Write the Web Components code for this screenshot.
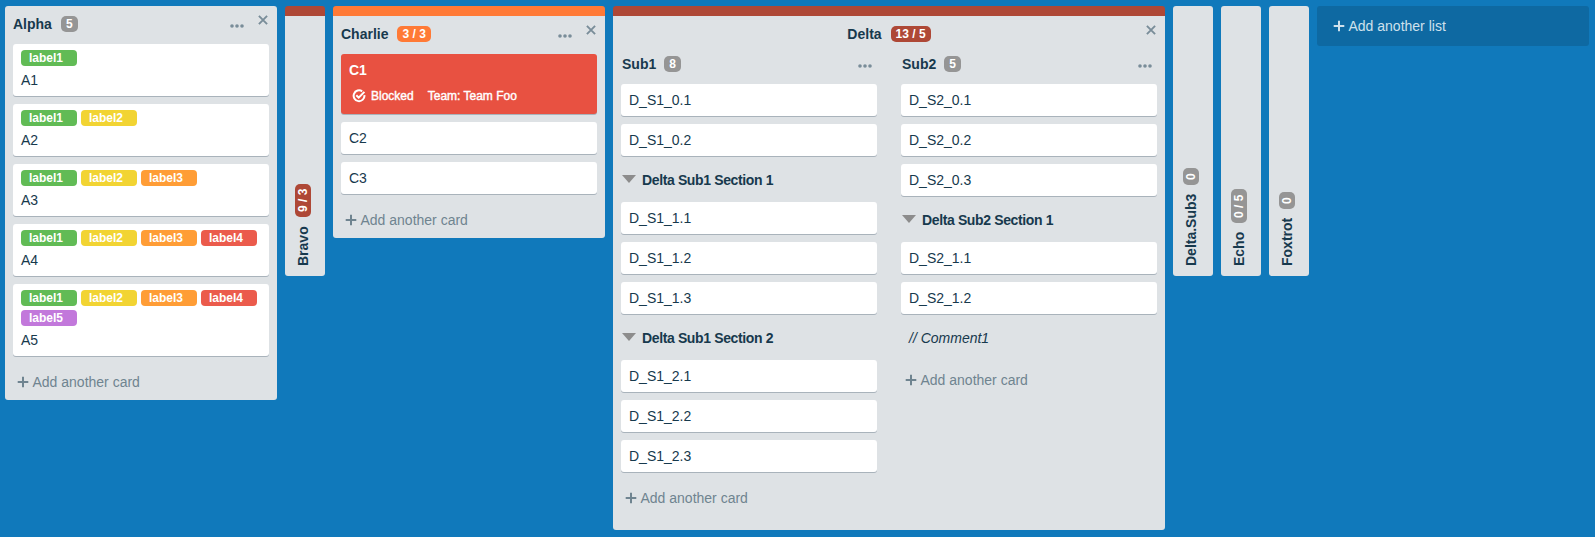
<!DOCTYPE html>
<html lang="en">
<head>
<meta charset="utf-8">
<title>Board</title>
<style>
  html, body { margin: 0; height: 100%; }
  body { background: #1079bb; overflow: hidden; font: 14px/20px "Liberation Sans", Arial, sans-serif; color: #17394d; }
</style>
</head>
<body>
<kb-board>
  <kb-list name="Alpha" count="5">
    <kb-card labels="1">A1</kb-card>
    <kb-card labels="1 2">A2</kb-card>
    <kb-card labels="1 2 3">A3</kb-card>
    <kb-card labels="1 2 3 4">A4</kb-card>
    <kb-card labels="1 2 3 4 5">A5</kb-card>
  </kb-list>
  <kb-collapsed name="Bravo" count="9 / 3" level="over"></kb-collapsed>
  <kb-list name="Charlie" count="3 / 3" level="full">
    <kb-card blocked fields="Team: Team Foo">C1</kb-card>
    <kb-card>C2</kb-card>
    <kb-card>C3</kb-card>
  </kb-list>
  <kb-group name="Delta" count="13 / 5" level="over">
    <kb-list sub name="Sub1" count="8">
      <kb-card>D_S1_0.1</kb-card>
      <kb-card>D_S1_0.2</kb-card>
      <kb-section>Delta Sub1 Section 1</kb-section>
      <kb-card>D_S1_1.1</kb-card>
      <kb-card>D_S1_1.2</kb-card>
      <kb-card>D_S1_1.3</kb-card>
      <kb-section>Delta Sub1 Section 2</kb-section>
      <kb-card>D_S1_2.1</kb-card>
      <kb-card>D_S1_2.2</kb-card>
      <kb-card>D_S1_2.3</kb-card>
    </kb-list>
    <kb-list sub name="Sub2" count="5">
      <kb-card>D_S2_0.1</kb-card>
      <kb-card>D_S2_0.2</kb-card>
      <kb-card>D_S2_0.3</kb-card>
      <kb-section>Delta Sub2 Section 1</kb-section>
      <kb-card>D_S2_1.1</kb-card>
      <kb-card>D_S2_1.2</kb-card>
      <kb-card comment>// Comment1</kb-card>
    </kb-list>
  </kb-group>
  <kb-collapsed name="Delta.Sub3" count="0"></kb-collapsed>
  <kb-collapsed name="Echo" count="0 / 5"></kb-collapsed>
  <kb-collapsed name="Foxtrot" count="0"></kb-collapsed>
  <kb-add-list>Add another list</kb-add-list>
</kb-board>

<script>
const icons = {
  close: '<svg width="10" height="10" viewBox="0 0 10 10"><path d="M.9.9 9.1 9.1M9.1.9.9 9.1" stroke="#798d99" stroke-width="1.9" fill="none"/></svg>',
  dots: '<svg width="14" height="4" viewBox="0 0 14 4" fill="#798d99"><circle cx="2" cy="2" r="1.8"/><circle cx="7" cy="2" r="1.8"/><circle cx="12" cy="2" r="1.8"/></svg>',
  plus: '<svg width="12" height="12" viewBox="0 0 12 12"><path d="M6 .7V11.3M.7 6H11.3" stroke="currentColor" stroke-width="2" fill="none"/></svg>',
  check: '<svg width="14" height="14" viewBox="0 0 14 14" fill="none" stroke="#fff" stroke-width="2"><path d="M10.2 2.4A5.4 5.4 0 1 0 12.4 6.2"/><path d="M4.3 6.2 6.7 8.6 12.4 2.9"/></svg>'
};

class KbElement extends HTMLElement {
  connectedCallback() {
    if (this.shadowRoot) return;
    this.attachShadow({ mode: 'open' }).innerHTML = this.render();
  }
  attr(name) { return this.getAttribute(name) || ''; }
}

customElements.define('kb-board', class extends KbElement {
  render() {
    return `<style>
      :host { display: flex; align-items: flex-start; gap: 8px; padding: 6px 5px; width: 1595px; box-sizing: border-box; }
    </style><slot></slot>`;
  }
});

customElements.define('kb-count', class extends KbElement {
  render() {
    return `<style>
      :host { display: block; flex: none; height: 16px; padding: 0 5px; border-radius: 5px; background: #959595; color: #fff; font-weight: bold; font-size: 12px; line-height: 16px; white-space: nowrap; }
      :host([level="full"]) { background: #ff7a36; }
      :host([level="over"]) { background: #ae4836; }
    </style><slot></slot>`;
  }
});

customElements.define('kb-card', class extends KbElement {
  render() {
    const labels = this.attr('labels').split(' ').filter(Boolean);
    const blocked = this.hasAttribute('blocked');
    return `<style>
      :host { display: block; box-sizing: border-box; min-height: 32px; padding: 6px 8px; border-radius: 3px; background: #fff; box-shadow: 0 1px 0 #a9b3bb; }
      :host([comment]) { background: none; box-shadow: none; font-style: italic; }
      :host([blocked]) { background: #e85141; color: #fff; height: 60px; }
      :host([blocked]) .title { font-weight: bold; }
      .title { height: 20px; }
      .labels { display: flex; flex-wrap: wrap; gap: 4px; margin-bottom: 4px; width: 240px; }
      .labels span { box-sizing: border-box; width: 56px; height: 16px; padding-left: 8px; border-radius: 4px; color: #fff; font-weight: bold; font-size: 12px; line-height: 16px; }
      .l1 { background: #61bb55; } .l2 { background: #f2d433; } .l3 { background: #ff9d36; } .l4 { background: #eb5b4c; } .l5 { background: #c278db; }
      .badges { display: flex; align-items: center; margin: 7px 0 0 3px; height: 18px; font-size: 12px; line-height: 18px; -webkit-text-stroke: .4px #fff; }
      .badges span { margin-left: 5px; } .badges span + span { margin-left: 14px; }
      svg { display: block; }
    </style>
    ${labels.length ? `<div class="labels">${labels.map(n => `<span class="l${n}">label${n}</span>`).join('')}</div>` : ''}
    <div class="title"><slot></slot></div>
    ${blocked ? `<div class="badges">${icons.check}<span>Blocked</span><span>${this.attr('fields')}</span></div>` : ''}`;
  }
});

customElements.define('kb-section', class extends KbElement {
  render() {
    return `<style>
      :host { display: flex; align-items: center; height: 30px; padding: 0 1px; gap: 6px; font-weight: bold; font-size: 14px; letter-spacing: -.37px; }
      i { width: 0; border: 7px solid transparent; border-top: 8px solid #8c8c8c; border-bottom: 0; }
      span { padding-top: 2px; }
    </style><i></i><span><slot></slot></span>`;
  }
});

customElements.define('kb-list', class extends KbElement {
  render() {
    const sub = this.hasAttribute('sub');
    return `<style>
      :host { display: block; flex: none; box-sizing: border-box; width: 272px; border-radius: 3px; background: #dee2e5; overflow: hidden; }
      :host([level="full"]) { border-top: 10px solid #ff7a36; }
      :host([sub]) { width: 256px; background: none; border-radius: 0; overflow: visible; }
      header { display: flex; height: 38px; padding: 0 9px 0 8px; box-sizing: border-box; }
      h2 { margin: 8px 9px 0 0; font-size: 14px; line-height: 20px; }
      kb-count { margin-top: 10px; }
      .tools { display: flex; margin-left: auto; gap: 14px; }
      .dots { margin-top: 18px; } .close { margin-top: 9px; }
      svg { display: block; }
      .cards { display: flex; flex-direction: column; gap: 8px; padding: 0 8px; }
      footer { display: flex; align-items: center; gap: 3.5px; height: 20px; padding: 16px 12px 8px; color: #6f8490; }
      :host([sub]) header { height: 30px; padding: 0 5px 0 1px; }
      :host([sub]) h2 { margin: 0 8px 0 0; } :host([sub]) kb-count { margin-top: 2px; } :host([sub]) .dots { margin-top: 10px; }
      :host([sub]) .cards { padding: 0; }
      :host([sub]) footer { padding-left: 4px; }
    </style>
    <header><h2>${this.attr('name')}</h2><kb-count level="${this.attr('level')}">${this.attr('count')}</kb-count>
      <div class="tools"><div class="dots">${icons.dots}</div>${sub ? '' : `<div class="close">${icons.close}</div>`}</div></header>
    <div class="cards"><slot></slot></div>
    <footer>${icons.plus}<span>Add another card</span></footer>`;
  }
});

customElements.define('kb-group', class extends KbElement {
  render() {
    return `<style>
      :host { display: block; flex: none; box-sizing: border-box; width: 552px; height: 524px; padding: 0 8px; border-radius: 3px; border-top: 10px solid #ae4836; background: #dee2e5; }
      header { display: grid; grid-template-columns: 1fr auto 1fr; height: 38px; }
      .name { grid-column: 2; display: flex; gap: 9px; }
      h2 { margin: 8px 0 0; font-size: 14px; line-height: 20px; }
      kb-count { margin-top: 10px; }
      .close { justify-self: end; margin: 9px 1px 0 0; }
      svg { display: block; }
      .lists { display: flex; gap: 24px; }
    </style>
    <header><div class="name"><h2>${this.attr('name')}</h2><kb-count level="${this.attr('level')}">${this.attr('count')}</kb-count></div><div class="close">${icons.close}</div></header>
    <div class="lists"><slot></slot></div>`;
  }
});

customElements.define('kb-collapsed', class extends KbElement {
  render() {
    return `<style>
      :host { display: flex; flex: none; box-sizing: border-box; width: 40px; height: 270px; border-radius: 3px; background: #dee2e5; }
      :host([level="over"]) { border-top: 10px solid #ae4836; }
      .name { display: flex; align-items: center; gap: 9px; width: 36px; padding-top: 10px; box-sizing: border-box; writing-mode: vertical-rl; transform: rotate(180deg); }
      h2 { margin: 0; font-size: 14px; line-height: 20px; }
      kb-count { height: auto; width: 16px; padding: 5px 0; }
    </style>
    <div class="name"><h2>${this.attr('name')}</h2><kb-count level="${this.attr('level')}">${this.attr('count')}</kb-count></div>`;
  }
});

customElements.define('kb-add-list', class extends KbElement {
  render() {
    return `<style>
      :host { display: flex; flex: none; box-sizing: border-box; align-items: center; gap: 3.5px; width: 272px; height: 40px; padding-left: 16px; border-radius: 3px; background: #0e69a2; color: #cfe1ec; }
      svg { display: block; }
    </style>${icons.plus}<span><slot></slot></span>`;
  }
});
</script>
</body>
</html>
